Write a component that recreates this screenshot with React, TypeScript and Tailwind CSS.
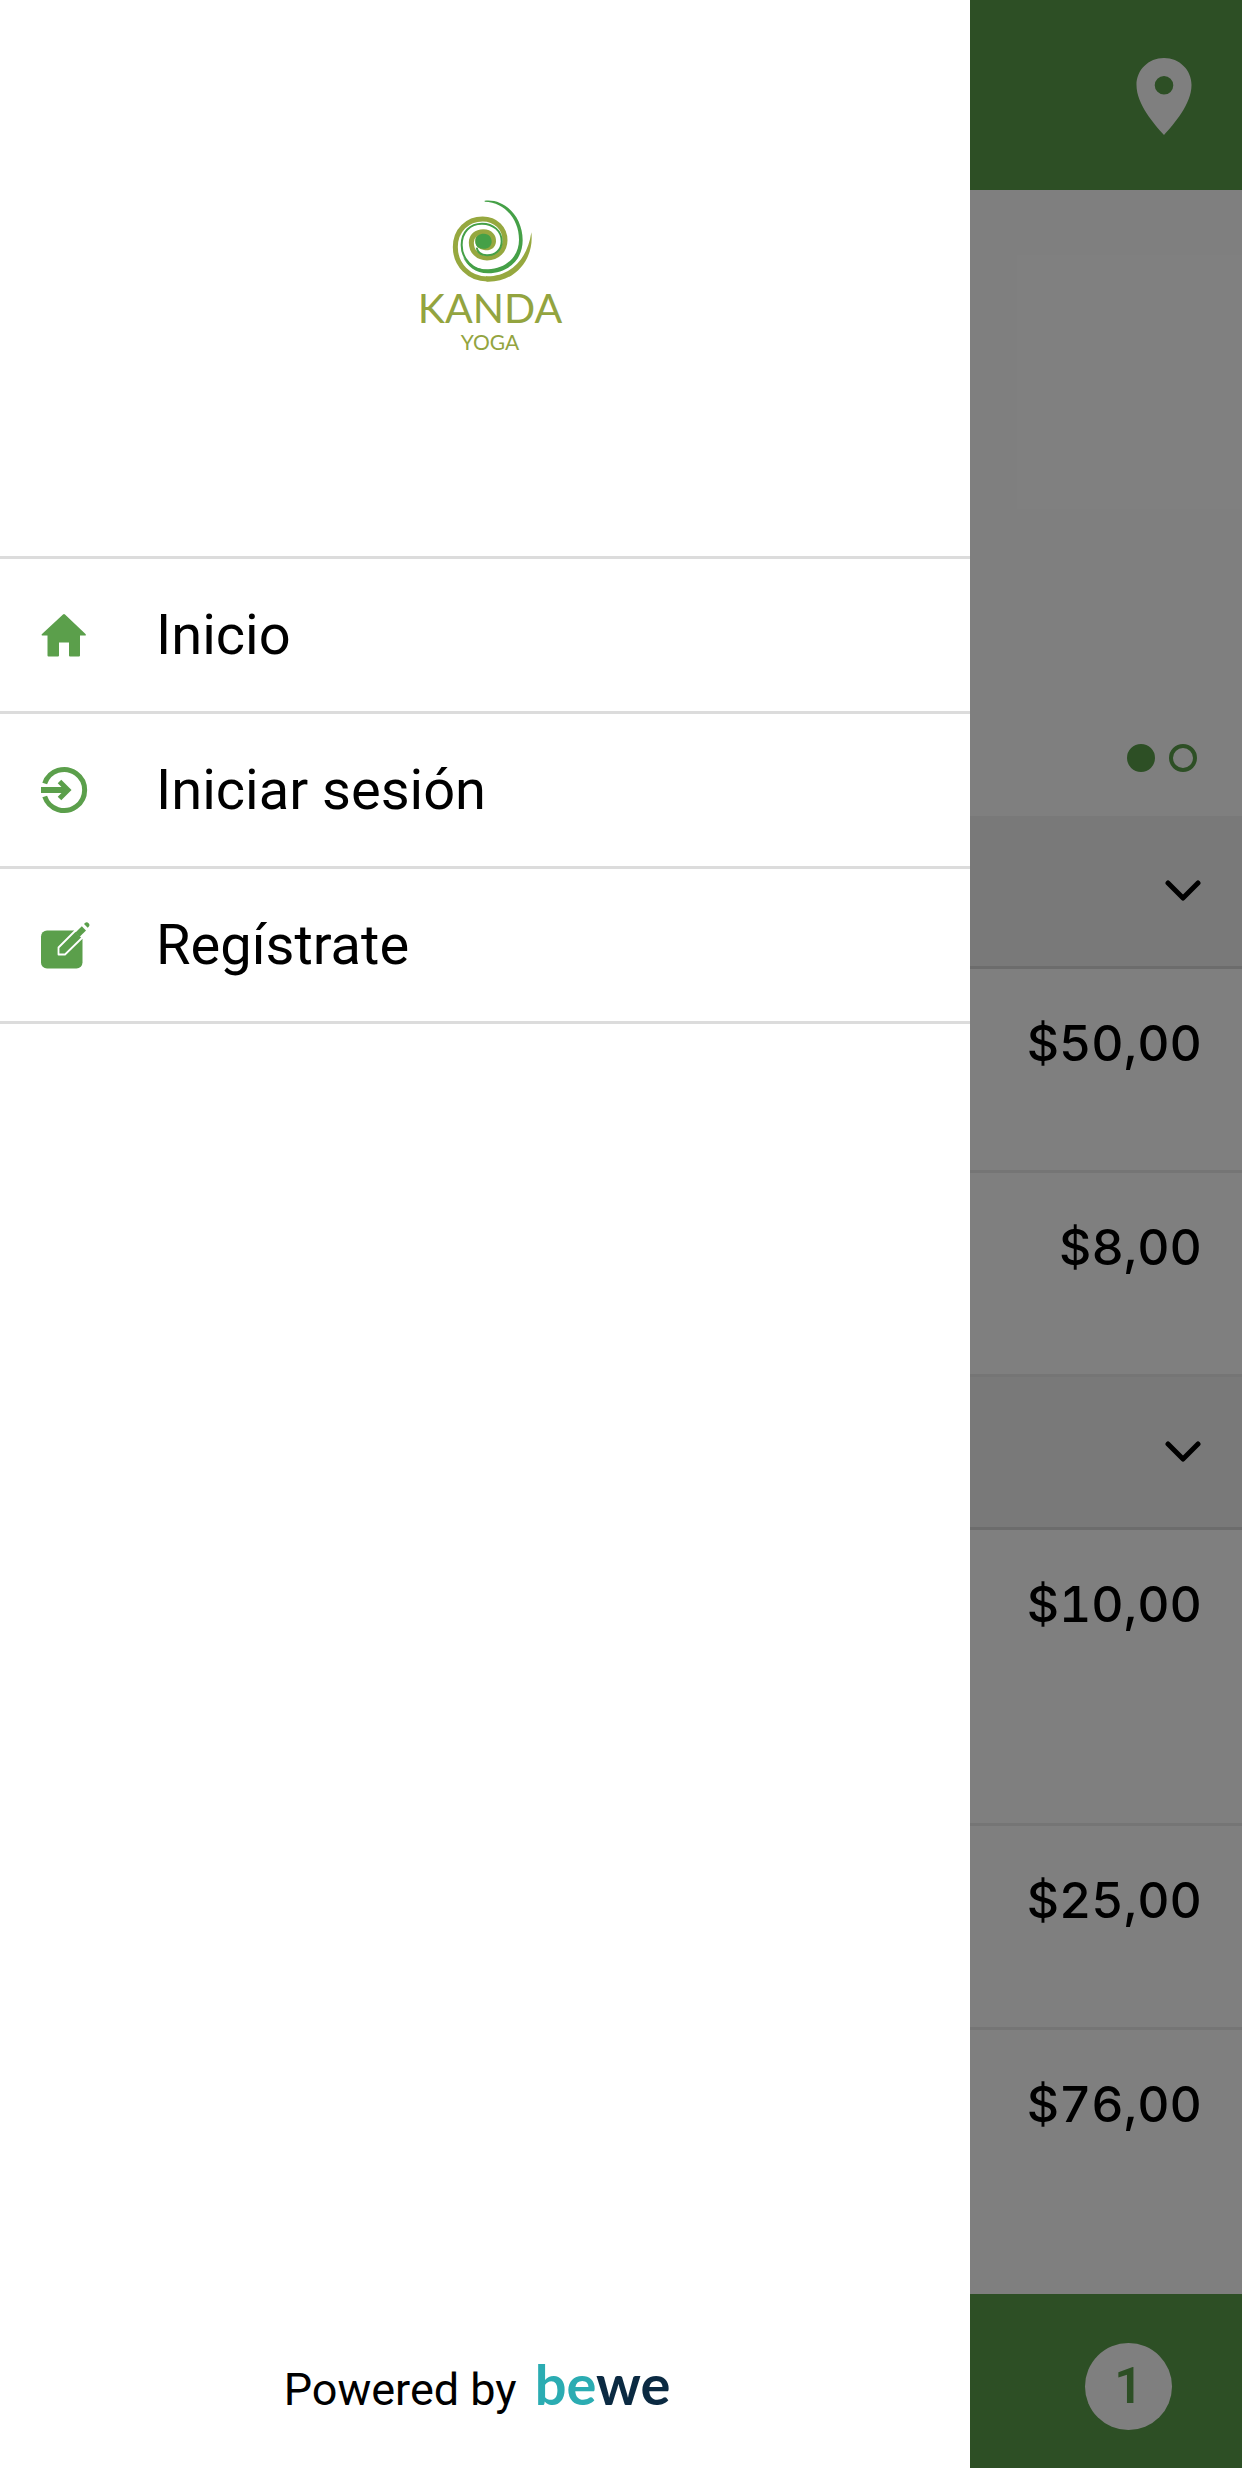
import { useState } from 'react';
import clsx from 'clsx';

interface Price {
  id: string;
  amount: string;
  className: string;
}

const passes: Price[] = [
  { id: 'pass-1', amount: '$50,00', className: 'h-[204px] border-b-3' },
  { id: 'pass-2', amount: '$8,00', className: 'h-[204px] border-b-3' },
];

const plans: Price[] = [
  { id: 'plan-1', amount: '$10,00', className: 'h-[296px] border-b-3' },
  { id: 'plan-2', amount: '$25,00', className: 'h-[204px] border-b-3' },
  { id: 'plan-3', amount: '$76,00', className: 'h-[264px]' },
];

const HomeIcon = () => (
  <svg viewBox="0 0 48 48" className="size-12 fill-[#5b9f4b]" aria-hidden="true">
    <path d="M23 3.500a1.500 1.500 0 0 1 2 0L45.500 23c.8.9.4 1.600-.6 1.600H40V44.500a1 1 0 0 1-1 1H30A1 1 0 0 1 29 44.500V31.500H19V44.500a1 1 0 0 1-1 1H8.500A1 1 0 0 1 7.500 44.500V24.600H2.600c-1 0-1.400-.9-.6-1.600Z" />
  </svg>
);

const LoginIcon = () => (
  <svg viewBox="0 0 48 48" className="size-12 fill-none stroke-[#5b9f4b]" aria-hidden="true">
    <path d="M4.700 17.500a20.500 20.500 0 1 1 0 13" strokeWidth="5" />
    <path d="M1 24h27" strokeWidth="6" />
    <path d="M19.500 15.500 28 24l-8.500 8.500" strokeWidth="5" />
  </svg>
);

const RegisterIcon = () => (
  <svg viewBox="0 0 50 48" className="h-12 w-[50px]" aria-hidden="true">
    <rect x="1" y="9.500" width="41.500" height="38" rx="6" fill="#5b9f4b" />
    <path d="M18.500 26.500 38 7l7 7-20 19.500h-6.500Z" fill="#5b9f4b" stroke="#fff" strokeWidth="1.800" strokeLinejoin="round" />
    <path d="M34 9.500 42.500 1l8 8-8 9" fill="#fff" />
    <path d="M35.500 11.500 41.800 5.200l4.200 4.200-6.300 6.300Z" fill="#5b9f4b" />
    <path d="m44 3 1-1c1.300-1.200 2.600-.8 3.600.2s1.300 2.300.1 3.500l-1 1Z" fill="#5b9f4b" />
  </svg>
);

const PinIcon = () => (
  <svg viewBox="0 0 56 78" className="h-[78px] w-14 fill-white" aria-hidden="true">
    <path
      fillRule="evenodd"
      d="M28 0C12.500 0 .5 12 .5 27 .5 46 18 66 28 77 38 66 55.500 46 55.500 27 55.500 12 43.500 0 28 0Zm0 18a9.300 9.300 0 1 1 0 18.600A9.300 9.300 0 0 1 28 18Z"
    />
  </svg>
);

const ChevronIcon = () => (
  <svg viewBox="0 0 36 22" className="h-[22px] w-9 fill-none stroke-black" aria-hidden="true">
    <path d="m3 3 15 15L33 3" strokeWidth="5" strokeLinecap="round" strokeLinejoin="round" />
  </svg>
);

const SpiralLogo = () => (
  <svg viewBox="142 50 264 264" className="size-[88px]" aria-hidden="true">
    <path
      d="M266 296C212 296 170 254 170 200 170 150 206 116 252 116 292 116 319 145 319 180 319 211 296 233 265 233 237 233 218 213 218 187 218 167 233 154 254 154"
      fill="none"
      stroke="#96a83f"
      strokeWidth="15"
    />
    <path d="M262 288C332 290 386 240 398 156 407 230 356 307 264 304Z" fill="#96a83f" />
    <path
      d="M270 272C222 272 189 236 189 194 189 155 214 130 250 130 284 130 309 152 309 183 309 210 288 226 264 225 246 224 236 214 234 202"
      fill="none"
      stroke="#45a047"
      strokeWidth="6"
    />
    <path d="M258 61C318 54 372 108 372 180 372 238 330 278 268 279 230 279 205 257 193 230 212 256 238 268 268 267 322 266 361 228 361 178 361 116 318 66 258 64Z" fill="#45a047" />
    <path d="M254 147C280 147 294 166 292 184 290 204 274 212 256 209 240 206 230 196 230 181 230 166 240 158 250 156Z" fill="#96a83f" />
    <path d="M230 184C230 167 242 160 256 160 271 160 280 172 279 185 278 199 266 207 253 205 239 204 230 196 230 184Z" fill="#45a047" />
  </svg>
);

const menuItems = [
  { label: 'Inicio', href: '#inicio', Icon: HomeIcon },
  { label: 'Iniciar sesión', href: '#iniciar-sesion', Icon: LoginIcon },
  { label: 'Regístrate', href: '#registrate', Icon: RegisterIcon },
];

const PriceList = ({ items }: { items: Price[] }) => (
  <ul>
    {items.map((item) => (
      <li key={item.id} className={clsx('flex justify-end border-[#ebebeb] pt-11 pr-10', item.className)}>
        <span className="font-['Inter','Liberation_Sans',sans-serif] text-[50px] leading-[60px] font-medium tabular-nums">
          {item.amount}
        </span>
      </li>
    ))}
  </ul>
);

const SectionToggle = ({ label }: { label: string }) => (
  <button
    type="button"
    aria-label={label}
    className="flex h-[153px] w-full items-center justify-end border-b-3 border-[#d8d8d8] bg-[#f3f3f3] pr-[41px]"
  >
    <ChevronIcon />
  </button>
);

export default function App() {
  const [slide, setSlide] = useState(0);

  return (
    <div className="relative min-h-screen bg-white font-['Roboto',sans-serif] text-black">
      <div className="flex min-h-screen flex-col">
        {/* Header */}
        <header className="flex h-[190px] items-center justify-end bg-[#5b9f4b] pt-1 pr-[50px]">
          <button type="button" aria-label="Ubicación">
            <PinIcon />
          </button>
        </header>

        <main className="flex-1">
          {/* Banner carousel */}
          <section className="flex h-[626px] items-end justify-end gap-3.5 pr-[45px] pb-11">
            {[0, 1].map((i) => (
              <button
                key={i}
                type="button"
                aria-label={`Imagen ${i + 1}`}
                onClick={() => setSlide(i)}
                className={clsx('size-7 rounded-full border-4 border-[#5b9f4b]', slide === i && 'bg-[#5b9f4b]')}
              />
            ))}
          </section>

          <SectionToggle label="Bonos" />
          <PriceList items={passes} />
          <SectionToggle label="Planes" />
          <PriceList items={plans} />
        </main>

        {/* Cart bar */}
        <footer className="flex h-[174px] items-center justify-end bg-[#5b9f4b] pt-2.5 pr-[70px]">
          <span className="flex size-[87px] items-center justify-center rounded-full bg-white text-[50px] leading-none font-semibold text-[#5b9f4b]">
            1
          </span>
        </footer>
      </div>

      {/* Drawer and backdrop */}
      <div className="absolute inset-0 grid grid-cols-[970fr_272fr]">
        <aside className="flex flex-col bg-white">
          <div className="flex h-[556px] flex-col items-center pt-[197px] pl-2.5 font-['Lato',sans-serif] text-[#93a43f]">
            <SpiralLogo />
            <span className="mt-[3px] text-[41px] leading-10">KANDA</span>
            <span className="mt-0.5 text-[21px] leading-6">YOGA</span>
          </div>

          <nav className="border-t-3 border-[#dcdcdc]">
            {menuItems.map(({ label, href, Icon }) => (
              <a key={label} href={href} className="flex h-[155px] items-center border-b-3 border-[#dcdcdc] pl-10">
                <span className="w-[116px]">
                  <Icon />
                </span>
                <span className="text-[56px] leading-[66px]">{label}</span>
              </a>
            ))}
          </nav>

          <div className="mt-auto flex items-baseline justify-center gap-[18px] pr-4 pb-12">
            <span className="text-[45px] leading-[60px]">Powered by</span>
            <span className="font-['Lato',sans-serif] text-[56px] leading-[60px] font-bold text-[#0b2a42]">
              <span className="text-[#2bacb2]">be</span>we
            </span>
          </div>
        </aside>
        <div className="bg-black/50" />
      </div>
    </div>
  );
}
